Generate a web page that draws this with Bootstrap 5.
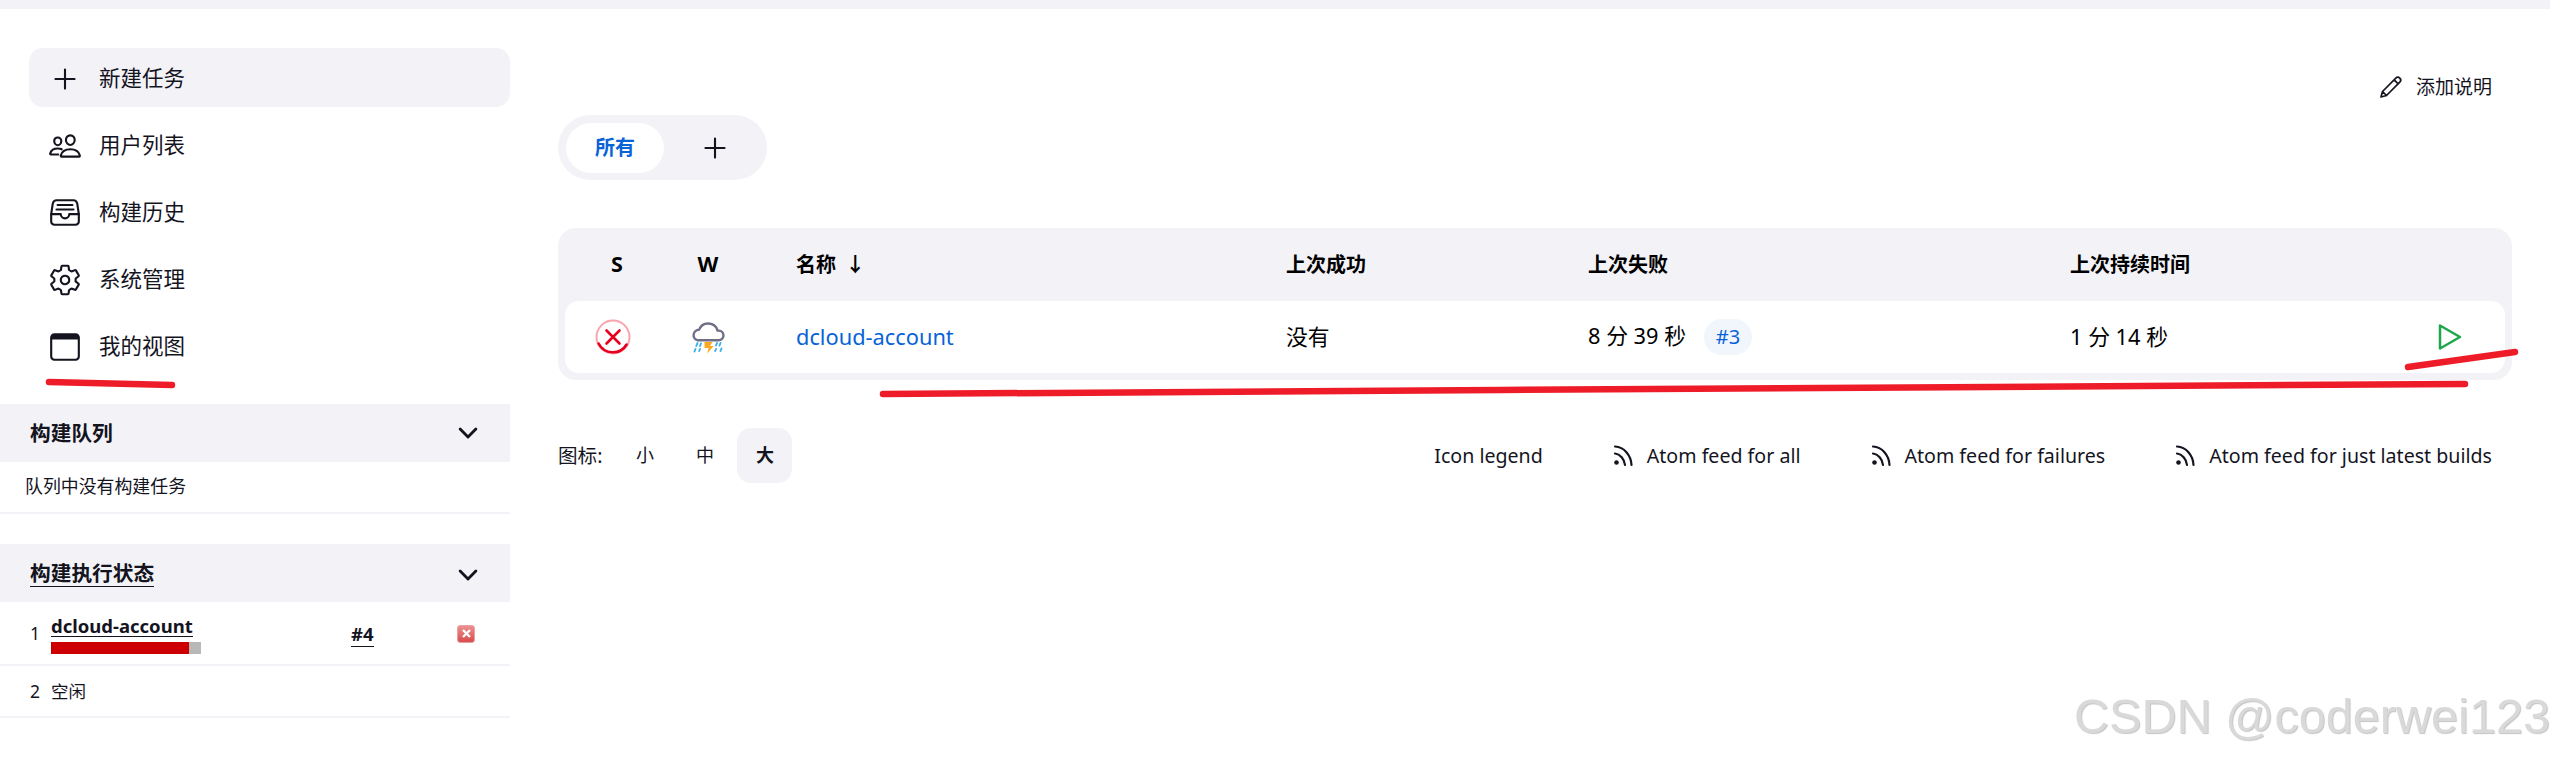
<!DOCTYPE html>
<html lang="zh-CN">
<head>
<meta charset="utf-8">
<title>Jenkins</title>
<link href="https://cdn.jsdelivr.net/npm/bootstrap@5.3.0/dist/css/bootstrap.min.css" rel="stylesheet">
<style>
html,body{height:759px;overflow:hidden}
body{position:relative;background:#fff;color:#14141f;font-family:"Noto Sans","Noto Sans CJK SC",sans-serif;font-size:20px;line-height:1.4}
a{color:inherit;text-decoration:none}
svg{display:block;flex:none}
.ion{fill:none;stroke:currentColor;stroke-width:32;stroke-linecap:round;stroke-linejoin:round}
.topstrip{height:9px;background:#f3f3f7}
.side-col{width:510px;flex:none;padding-top:39px}
.side-link{height:59px;padding:2px 0 0 19px;gap:17px;font-size:21.5px;border-radius:14px;margin:0 0 8px 29px}
.side-link.is-active{background:#f3f3f7}
.pane-head{height:58px;background:#f3f3f7;padding:0 28px 0 30px;font-size:20.7px;font-weight:700}
.pane-head svg{stroke-width:52}
.first-pane{margin-top:29px}
.queue-empty{height:52px;padding-left:25px;font-size:17.9px;border-bottom:2px solid #f3f3f7}
.pane-gap{margin-top:30px;padding-top:3px}
.under{border-bottom:1.5px solid #14141f;line-height:1.15}
.exec-row{padding-left:30px;font-size:17.5px;border-bottom:2px solid #f3f3f7}
.exec-num{width:21px}
.exec-one{height:64px;padding-top:1px}
.exec-two{height:52px;padding-top:1px}
.exec-job{width:150px;font-weight:700;font-size:18.5px}
.job-name{display:inline-block;border-bottom:1.5px solid #14141f;line-height:20px;margin-top:-3px}
.exec-bar{height:12px;background:#b8b8b8;margin-top:3px}
.exec-fill{height:100%;background:#c00}
.exec-build{margin-left:150px;width:106px;font-weight:700;font-size:18.5px}
.stop-btn{width:18px;height:18px;border-radius:3px;background:linear-gradient(#ee8f8f,#d94c4c);border:1px solid #e9a0a0}
.main-col{margin-left:48px;width:1954px}
.desc-row{height:34px;margin-top:61px;padding-right:20px;gap:13px;font-size:19px}
.tab-bar{width:209px;height:65px;margin-top:11px;padding:7px 8px;border-radius:33px;background:#f3f3f7}
.tab-on{width:98px;height:50px;background:#fff;border-radius:25px;color:#0863d6;font-weight:700}
.tab-add{margin-left:34px}
.job-wrap{margin-top:48px;padding:0 7px 7px;background:#f3f3f7;border-radius:18px}
.job-table{width:1940px;table-layout:fixed;border-collapse:separate;border-spacing:0}
.job-table th{height:73px;font-weight:700;color:#000;font-size:20px;vertical-align:middle}
.job-table th.cell-center{font-size:21.5px}
.job-table td{height:72px;background:#fff;color:#000;vertical-align:middle;font-size:21.8px}
.job-table td:first-child{border-radius:14px 0 0 14px}
.job-table td:last-child{border-radius:0 14px 14px 0}
.cell-name{padding-left:49px}
.cell-center{text-align:center}
.cell-play{padding-left:18px}
.link-blue{color:#0863d6}
.build-tag{display:inline-block;width:48px;height:36px;line-height:36px;text-align:center;margin-left:18px;border-radius:18px;background:#f1f6fd;color:#0863d6;font-size:20px}
.legend-row{margin-top:48px;font-size:19.6px}
.size-btn{width:55px;height:55px;border-radius:14px;font-size:18px}
.size-btn.is-active{background:#f3f3f7;font-weight:700}
.size-group{margin-left:15px;gap:5px}
.feed-links{margin-left:auto;padding-right:20px}
.feed-item{gap:13px;margin-left:69px}
.marks{position:absolute;left:0;top:0;pointer-events:none}
.watermark{position:absolute;right:0;top:688px;font-family:"Liberation Sans",sans-serif;font-size:48.6px;line-height:56px;color:#d9d9d9;text-shadow:1px 1px 1px #c4c4c4;white-space:nowrap}
</style>
</head>
<body>
<div class="topstrip"></div>
<div class="d-flex">
  <aside class="side-col">
    <a href="#" class="side-link is-active d-flex align-items-center">
      <svg width="34" height="34" viewBox="0 0 512 512" class="ion"><path d="M256 112v288M400 256H112"/></svg>新建任务
    </a>
    <a href="#" class="side-link d-flex align-items-center">
      <svg width="34" height="34" viewBox="0 0 512 512" class="ion"><path d="M402 168c-2.93 40.67-33.1 72-66 72s-63.12-31.32-66-72c-3-42.31 26.37-72 66-72s69 30.46 66 72z"/><path d="M336 304c-65.17 0-127.84 32.37-143.54 95.41-2.08 8.34 3.15 16.59 11.72 16.59h263.65c8.57 0 13.77-8.25 11.72-16.59C463.85 335.36 401.18 304 336 304z"/><path d="M200 185.94c-2.34 32.48-26.72 58.06-53 58.06s-50.7-25.57-53-58.06C91.61 152.15 115.34 128 147 128s55.39 24.77 53 57.94z"/><path d="M206 306c-18.05-8.27-37.93-11.45-59-11.45-52 0-102.1 25.85-114.65 76.2-1.65 6.66 2.53 13.25 9.37 13.25H154"/></svg>用户列表
    </a>
    <a href="#" class="side-link d-flex align-items-center">
      <svg width="34" height="34" viewBox="0 0 512 512" class="ion"><path d="M128 64h256c32 0 48 20 56 48l24 160v112a48 48 0 01-48 48H96a48 48 0 01-48-48V272l24-160c8-28 24-48 56-48z"/><path d="M48 272h144M320 272h144M192 272a64 64 0 00128 0M144 136h224M128 204h256"/></svg>构建历史
    </a>
    <a href="#" class="side-link d-flex align-items-center">
      <svg width="34" height="34" viewBox="0 0 512 512" class="ion"><path d="M262.29 192.31a64 64 0 1057.4 57.4 64.13 64.13 0 00-57.4-57.4zM416.39 256a154.34 154.34 0 01-1.53 20.79l45.21 35.46a10.81 10.81 0 012.45 13.75l-42.77 74a10.81 10.81 0 01-13.14 4.59l-44.9-18.08a16.11 16.11 0 00-15.17 1.75A164.48 164.48 0 01325 400.8a15.94 15.94 0 00-8.82 12.14l-6.73 47.89a11.08 11.08 0 01-10.68 9.17h-85.54a11.11 11.11 0 01-10.69-8.87l-6.72-47.82a16.07 16.07 0 00-9-12.22 155.3 155.3 0 01-21.46-12.57 16 16 0 00-15.11-1.71l-44.89 18.07a10.81 10.81 0 01-13.14-4.58l-42.77-74a10.8 10.8 0 012.45-13.75l38.21-30a16.05 16.05 0 006-14.08c-.36-4.17-.58-8.33-.58-12.5s.21-8.27.58-12.35a16 16 0 00-6.07-13.94l-38.19-30A10.81 10.81 0 0149.48 186l42.77-74a10.81 10.81 0 0113.14-4.59l44.9 18.08a16.11 16.11 0 0015.17-1.75A164.48 164.48 0 01187 111.2a15.94 15.94 0 008.82-12.14l6.73-47.89A11.08 11.08 0 01213.23 42h85.54a11.11 11.11 0 0110.69 8.87l6.72 47.82a16.07 16.07 0 009 12.22 155.3 155.3 0 0121.46 12.57 16 16 0 0015.11 1.71l44.89-18.07a10.81 10.81 0 0113.14 4.58l42.77 74a10.8 10.8 0 01-2.45 13.75l-38.21 30a16.05 16.05 0 00-6.05 14.08c.33 4.14.55 8.3.55 12.47z"/></svg>系统管理
    </a>
    <a href="#" class="side-link d-flex align-items-center">
      <svg width="34" height="34" viewBox="0 0 512 512" class="ion"><rect x="48" y="64" width="416" height="384" rx="48"/><path fill="currentColor" stroke="none" d="M397.82 64H114.18C77.69 64 48 94.15 48 131.2V144h416v-12.8c0-37.05-29.69-67.2-66.18-67.2z"/></svg>我的视图
    </a>

    <div class="pane-head first-pane d-flex align-items-center justify-content-between">
      <span>构建队列</span>
      <svg width="28" height="28" viewBox="0 0 512 512" class="ion"><path d="M112 184l144 144 144-144"/></svg>
    </div>
    <div class="queue-empty d-flex align-items-center">队列中没有构建任务</div>

    <div class="pane-head pane-gap d-flex align-items-center justify-content-between">
      <span class="under">构建执行状态</span>
      <svg width="28" height="28" viewBox="0 0 512 512" class="ion"><path d="M112 184l144 144 144-144"/></svg>
    </div>
    <div class="exec-row exec-one d-flex align-items-center">
      <span class="exec-num">1</span>
      <div class="exec-job">
        <a href="#" class="job-name">dcloud-account</a>
        <div class="exec-bar"><div class="exec-fill" style="width:92%"></div></div>
      </div>
      <a href="#" class="exec-build"><span class="under">#4</span></a>
      <span class="stop-btn d-flex align-items-center justify-content-center">
        <svg width="11" height="11" viewBox="0 0 11 11"><path d="M2 2l7 7M9 2l-7 7" stroke="#fff" stroke-width="2.4" fill="none"/></svg>
      </span>
    </div>
    <div class="exec-row exec-two d-flex align-items-center">
      <span class="exec-num">2</span><span>空闲</span>
    </div>
  </aside>

  <main class="main-col">
    <div class="desc-row d-flex align-items-center justify-content-end">
      <svg width="24" height="24" viewBox="0 0 24 24" fill="none" stroke="currentColor" stroke-width="1.7" stroke-linejoin="round" stroke-linecap="round"><path d="M2 22l1.5-5.5L16.8 3.200a2.800 2.800 0 0 1 4 4L7.500 20.500zM15.200 4.800l4 4M3.500 16.500l4 4"/></svg>
      <a href="#">添加说明</a>
    </div>

    <div class="tab-bar d-flex align-items-center">
      <a href="#" class="tab-on d-flex align-items-center justify-content-center">所有</a>
      <a href="#" class="tab-add"><svg width="34" height="34" viewBox="0 0 512 512" class="ion"><path d="M256 112v288M400 256H112"/></svg></a>
    </div>

    <div class="job-wrap">
      <table class="job-table">
        <colgroup><col style="width:104px"><col style="width:78px"><col style="width:538px"><col style="width:302px"><col style="width:482px"><col style="width:351px"><col style="width:85px"></colgroup>
        <thead>
          <tr>
            <th class="cell-center">S</th>
            <th class="cell-center">W</th>
            <th class="cell-name">名称 <span class="ms-1">↓</span></th>
            <th>上次成功</th>
            <th>上次失败</th>
            <th>上次持续时间</th>
            <th></th>
          </tr>
        </thead>
        <tbody>
          <tr>
            <td>
              <svg class="ms-auto me-auto" width="36" height="36" viewBox="0 0 36 36" fill="none" style="transform:translateX(-4px)">
                <circle cx="18" cy="18" r="16.5" stroke="#f8a5ae" stroke-width="2"/>
                <path d="M3.600 24.500A16 16 0 0 0 31.600 25.500" stroke="#e6001f" stroke-width="2.600" stroke-linecap="round"/>
                <path d="M11.500 11.500l13 13M24.500 11.500l-13 13" stroke="#e6001f" stroke-width="2.600" stroke-linecap="round"/>
              </svg>
            </td>
            <td>
              <svg class="ms-auto me-auto" width="34" height="34" viewBox="0 0 34 34" fill="none">
                <path d="M6.500 20.200h21a4.800 4.800 0 0 0 .3-9.600h-1.200A9.800 9.800 0 0 0 8 9.800 5.300 5.300 0 0 0 6.500 20.200z" stroke="#6f6f85" stroke-width="2.400" stroke-linejoin="round"/>
                <path d="M13.500 22h8l-2.600 4h3.800l-6.500 7.500 1.400-5.500h-4z" fill="#f9a91f"/>
                <path d="M6.500 23l-1.200 3M4.500 29l-1 2.500M10 23.500l-1 2.500M9 29l-.8 2M26 23l-1 2.500M25 29l-.8 2M29.500 23l-1 2.500M30.500 28.500l-1 2.500" stroke="#3cb0ea" stroke-width="1.900" stroke-linecap="round"/>
              </svg>
            </td>
            <td class="cell-name"><a href="#" class="link-blue">dcloud-account</a></td>
            <td>没有</td>
            <td>8 分 39 秒<a href="#" class="build-tag">#3</a></td>
            <td>1 分 14 秒</td>
            <td class="cell-play">
              <svg width="24" height="28" viewBox="0 0 24 28" fill="none"><path d="M2 2.500L22 14 2 25.500z" stroke="#1fa64a" stroke-width="2.500" stroke-linejoin="round"/></svg>
            </td>
          </tr>
        </tbody>
      </table>
    </div>

    <div class="legend-row d-flex align-items-center">
      <span>图标:</span>
      <div class="size-group d-flex">
        <a href="#" class="size-btn d-flex align-items-center justify-content-center">小</a>
        <a href="#" class="size-btn d-flex align-items-center justify-content-center">中</a>
        <a href="#" class="size-btn is-active d-flex align-items-center justify-content-center">大</a>
      </div>
      <div class="feed-links d-flex align-items-center">
        <a href="#">Icon legend</a>
        <a href="#" class="feed-item d-flex align-items-center"><svg width="22" height="24" viewBox="0 0 22 24" fill="none" stroke="#14141f" stroke-width="2.200" stroke-linecap="round"><path d="M3 3.500C12 4 19 12 19.500 22M3 10.500C8 11 12.500 16 13 22"/><circle cx="4.500" cy="19.500" r="2.300" fill="#14141f" stroke="none"/></svg>Atom feed for all</a>
        <a href="#" class="feed-item d-flex align-items-center"><svg width="22" height="24" viewBox="0 0 22 24" fill="none" stroke="#14141f" stroke-width="2.200" stroke-linecap="round"><path d="M3 3.500C12 4 19 12 19.500 22M3 10.500C8 11 12.500 16 13 22"/><circle cx="4.500" cy="19.500" r="2.300" fill="#14141f" stroke="none"/></svg>Atom feed for failures</a>
        <a href="#" class="feed-item d-flex align-items-center"><svg width="22" height="24" viewBox="0 0 22 24" fill="none" stroke="#14141f" stroke-width="2.200" stroke-linecap="round"><path d="M3 3.500C12 4 19 12 19.500 22M3 10.500C8 11 12.500 16 13 22"/><circle cx="4.500" cy="19.500" r="2.300" fill="#14141f" stroke="none"/></svg>Atom feed for just latest builds</a>
      </div>
    </div>
  </main>
</div>

<svg class="marks" width="2550" height="759" viewBox="0 0 2550 759" fill="none" stroke="#ee1c28" stroke-linecap="round">
  <path d="M49 382L172 385" stroke-width="6.500"/>
  <path d="M883 394L1500 390 2465 384" stroke-width="6.500"/>
  <path d="M2408 367L2515 352" stroke-width="6.500"/>
</svg>
<div class="watermark">CSDN @coderwei123</div>
<script src="https://cdn.jsdelivr.net/npm/bootstrap@5.3.0/dist/js/bootstrap.bundle.min.js"></script>
</body>
</html>
